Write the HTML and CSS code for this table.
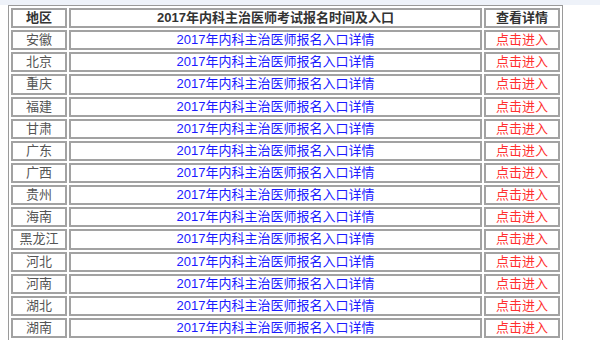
FILE: index.html
```html
<!DOCTYPE html>
<html lang="zh-CN">
<head>
<meta charset="utf-8">
<title>2017年内科主治医师考试报名时间及入口</title>
<link rel="stylesheet" href="styles.css">
</head>
<body>
<div class="band"></div>
<table class="entry-table">
  <colgroup>
    <col class="c-region">
    <col class="c-title">
    <col class="c-link">
  </colgroup>
  <thead>
    <tr>
      <th>地区</th>
      <th>2017年内科主治医师考试报名时间及入口</th>
      <th>查看详情</th>
    </tr>
  </thead>
  <tbody>
    <tr><td class="region">安徽</td><td><a class="detail" href="#">2017年内科主治医师报名入口详情</a></td><td><a class="go" href="#">点击进入</a></td></tr>
    <tr><td class="region">北京</td><td><a class="detail" href="#">2017年内科主治医师报名入口详情</a></td><td><a class="go" href="#">点击进入</a></td></tr>
    <tr><td class="region">重庆</td><td><a class="detail" href="#">2017年内科主治医师报名入口详情</a></td><td><a class="go" href="#">点击进入</a></td></tr>
    <tr><td class="region">福建</td><td><a class="detail" href="#">2017年内科主治医师报名入口详情</a></td><td><a class="go" href="#">点击进入</a></td></tr>
    <tr><td class="region">甘肃</td><td><a class="detail" href="#">2017年内科主治医师报名入口详情</a></td><td><a class="go" href="#">点击进入</a></td></tr>
    <tr><td class="region">广东</td><td><a class="detail" href="#">2017年内科主治医师报名入口详情</a></td><td><a class="go" href="#">点击进入</a></td></tr>
    <tr><td class="region">广西</td><td><a class="detail" href="#">2017年内科主治医师报名入口详情</a></td><td><a class="go" href="#">点击进入</a></td></tr>
    <tr><td class="region">贵州</td><td><a class="detail" href="#">2017年内科主治医师报名入口详情</a></td><td><a class="go" href="#">点击进入</a></td></tr>
    <tr><td class="region">海南</td><td><a class="detail" href="#">2017年内科主治医师报名入口详情</a></td><td><a class="go" href="#">点击进入</a></td></tr>
    <tr><td class="region">黑龙江</td><td><a class="detail" href="#">2017年内科主治医师报名入口详情</a></td><td><a class="go" href="#">点击进入</a></td></tr>
    <tr><td class="region">河北</td><td><a class="detail" href="#">2017年内科主治医师报名入口详情</a></td><td><a class="go" href="#">点击进入</a></td></tr>
    <tr><td class="region">河南</td><td><a class="detail" href="#">2017年内科主治医师报名入口详情</a></td><td><a class="go" href="#">点击进入</a></td></tr>
    <tr><td class="region">湖北</td><td><a class="detail" href="#">2017年内科主治医师报名入口详情</a></td><td><a class="go" href="#">点击进入</a></td></tr>
    <tr><td class="region">湖南</td><td><a class="detail" href="#">2017年内科主治医师报名入口详情</a></td><td><a class="go" href="#">点击进入</a></td></tr>
  </tbody>
</table>
</body>
</html>
```

FILE: styles.css
```css
html, body {
  margin: 0;
  padding: 0;
  background: #ffffff;
}

body {
  font-family: "Liberation Sans", "Noto Sans CJK SC", sans-serif;
  font-size: 13px;
  color: #555555;
}

.band {
  height: 5px;
  background: #eef2f9;
}

.entry-table {
  margin-left: 8px;
  width: 555px;
  table-layout: fixed;
  border: 1px solid #9a9a9a;
  border-spacing: 2px;
  border-collapse: separate;
}

.c-region { width: 56px; }
.c-link { width: 76px; }

.entry-table tr {
  height: 20.15px;
}

.entry-table th,
.entry-table td {
  border: 2px solid #a2a2a2;
  padding: 0;
  line-height: 16px;
  text-align: center;
  white-space: nowrap;
  overflow: hidden;
}

.entry-table th {
  font-weight: bold;
  color: #333333;
}

.region {
  color: #555555;
}

.detail {
  color: #1a1aff;
  text-decoration: none;
}

.go {
  color: #ff3030;
  text-decoration: none;
}
```
